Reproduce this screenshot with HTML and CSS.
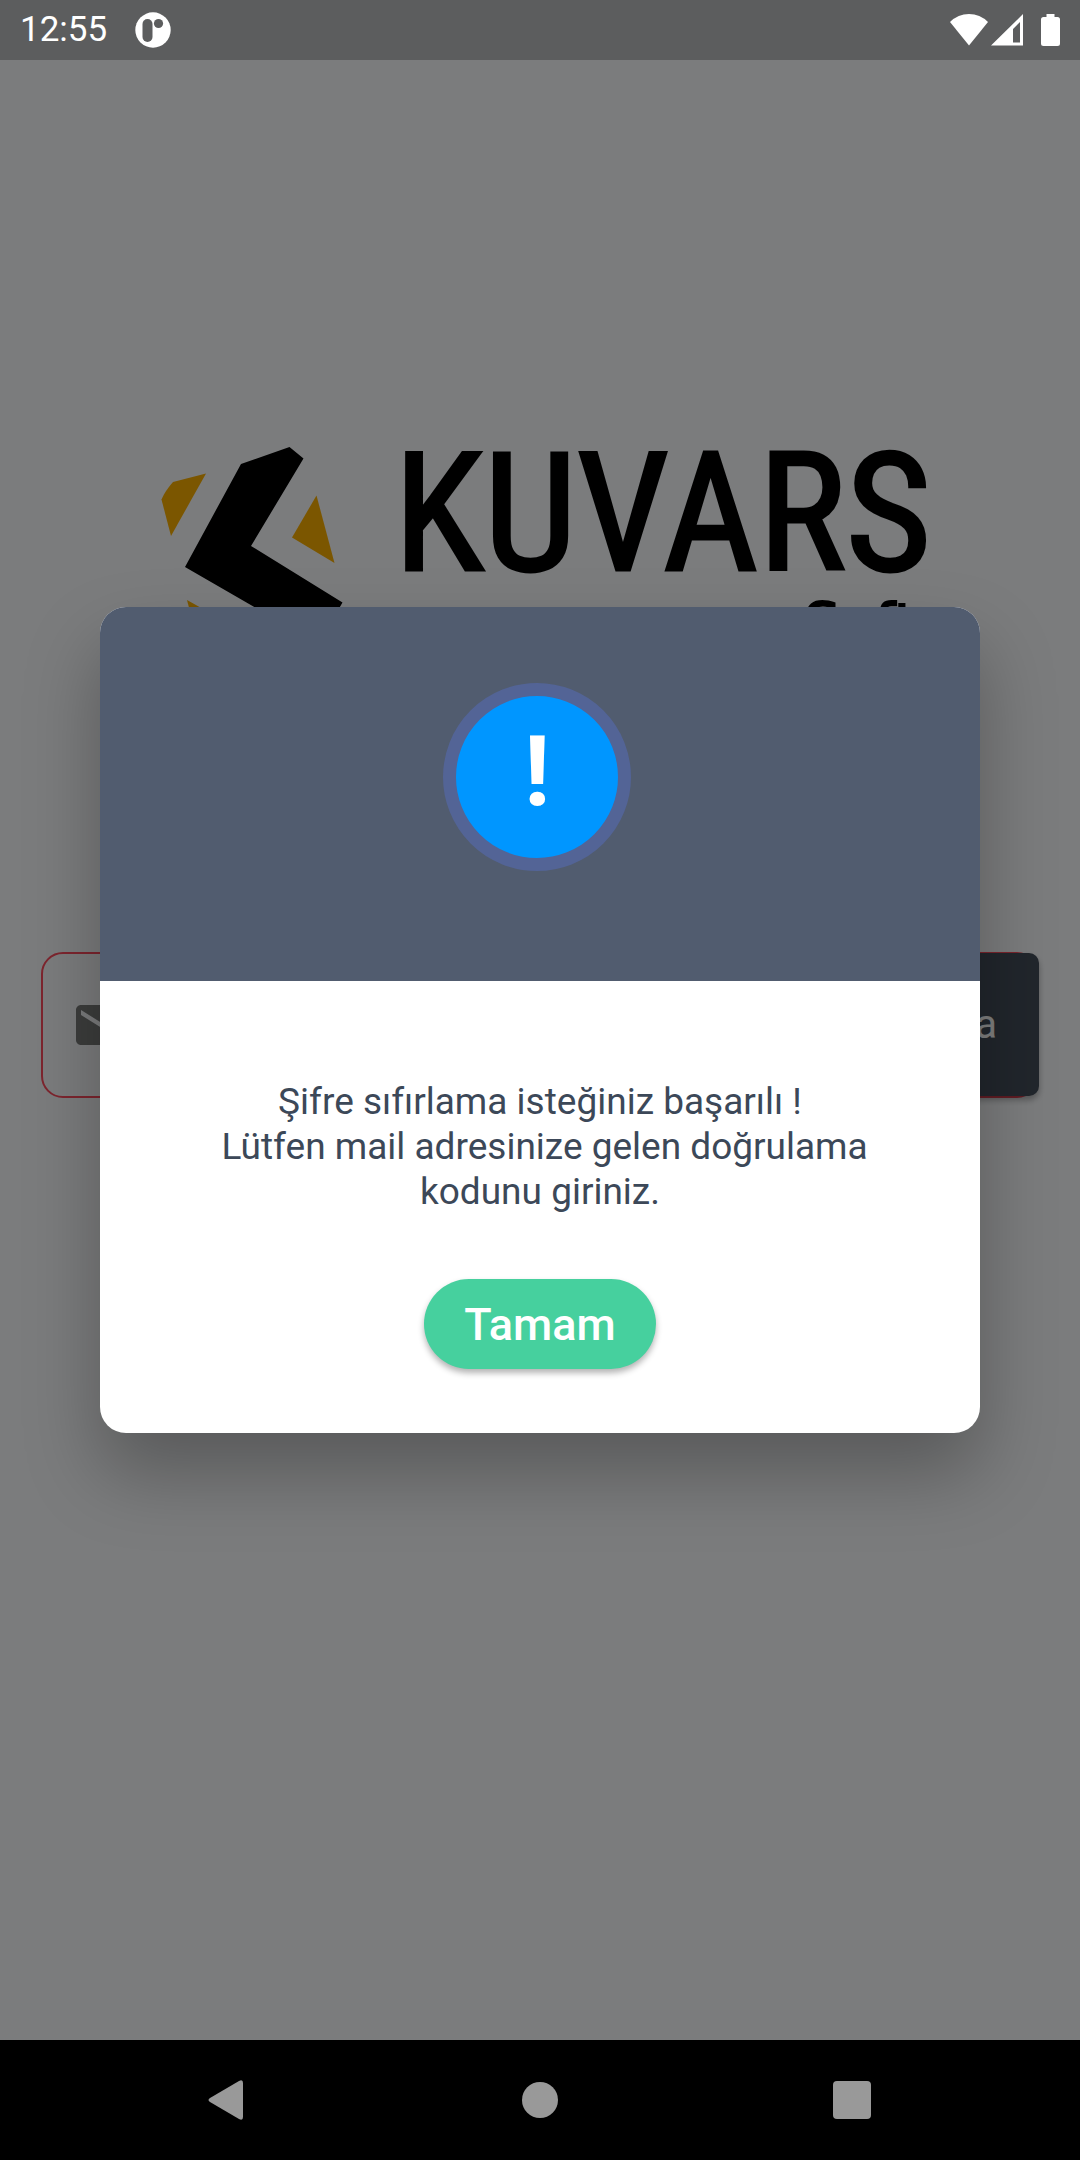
FILE: index.html
```html
<!DOCTYPE html>
<html lang="tr">
<head>
<meta charset="utf-8">
<meta name="viewport" content="width=device-width, initial-scale=1">
<title>Kuvars Soft</title>
<link rel="stylesheet" href="styles.css">
</head>
<body>
<div class="app">
  <header class="status">
    <time class="clock">12:55</time>
    <svg class="status-app" viewBox="0 0 36 36" aria-hidden="true">
      <circle cx="18" cy="18" r="17.7" fill="#fff"/>
      <rect x="7.5" y="7" width="10" height="23" rx="5" fill="#5c5d5e"/>
      <circle cx="23.5" cy="11.5" r="4.6" fill="#5c5d5e"/>
    </svg>
    <svg class="status-icons" viewBox="0 0 112 34" aria-hidden="true">
      <g fill="#fff">
        <path d="M0 9Q8 1 19 1t19 8L19 32.500z"/>
        <path fill-rule="evenodd" d="M73 1v31.500H41zM70 9l-7 7v13.500h7z"/>
        <path d="M96.500 1h8v3h3q2.500 0 2.500 2.500v24q0 2.500-2.500 2.500h-14q-2.500 0-2.500-2.500v-24q0-2.500 2.500-2.500h3z"/>
      </g>
    </svg>
  </header>

  <main class="page">
    <svg class="logo" viewBox="0 0 800 300" role="img" aria-label="Kuvars Soft">
      <g fill="#f7ac00">
        <path d="M66 13.500 33 22Q25 31 21.500 39.500L31 76z"/>
        <path d="M176.500 35.500 194.500 103 152 77.500z"/>
        <path d="M47 140l50 28-34 34z"/>
      </g>
      <path d="M101 4 149.500-13 163.500-1.500 111 86 202.500 142.500 150 232 140 162 45 107z"/>
      <text class="logo-name" x="254" y="110">KUVARS</text>
      <text class="logo-sub" x="664" y="184">Soft</text>
    </svg>
    <form class="reset">
      <label class="mail-icon" for="mail" aria-label="E-posta">
        <svg viewBox="0 0 24 24"><path fill="#787a79" d="M20 4H4c-1.100 0-2 .9-2 2v12c0 1.100.9 2 2 2h16c1.100 0 2-.9 2-2V6c0-1.100-.9-2-2-2zm0 4-8 5-8-5V6l8 5 8-5z"/></svg>
      </label>
      <input class="mail" id="mail" type="email">
      <button class="send" type="button">Yolla</button>
    </form>
  </main>

  <div class="overlay">
    <section class="dialog" role="alertdialog" aria-modal="true" aria-describedby="message">
      <div class="dialog-head"><div class="badge">!</div></div>
      <div class="dialog-body">
        <p class="message" id="message">Şifre sıfırlama isteğiniz başarılı !<br>&nbsp;Lütfen mail adresinize gelen doğrulama kodunu giriniz.</p>
        <button class="ok" type="button">Tamam</button>
      </div>
    </section>
  </div>
</div>

<nav class="nav">
  <button class="nav-button" type="button" aria-label="Geri"><svg viewBox="0 0 48 48"><path d="M39 7v34q0 4-4 2L6 26q-3-2 0-4L35 5q4-2 4 2z"/></svg></button>
  <button class="nav-button" type="button" aria-label="Ana ekran"><svg viewBox="0 0 48 48"><circle cx="24" cy="24" r="18"/></svg></button>
  <button class="nav-button" type="button" aria-label="Son uygulamalar"><svg viewBox="0 0 48 48"><rect x="5" y="5" width="38" height="38" rx="4"/></svg></button>
</nav>
</body>
</html>
```

FILE: styles.css
```css
* {
  box-sizing: border-box;
}

body {
  margin: 0;
  min-height: 100vh;
  display: flex;
  flex-direction: column;
  font-family: Roboto, "Liberation Sans", sans-serif;
  background: #000;
}

button {
  border: 0;
  font-family: inherit;
}

.app {
  position: relative;
  flex: 1;
  display: flex;
  flex-direction: column;
  background: #f7f9fb;
}

.status {
  position: relative;
  z-index: 2;
  height: 60px;
  padding: 0 18px 0 20px;
  display: flex;
  align-items: center;
  background: #5c5d5e;
  color: #fff;
}

.clock {
  font-size: 35px;
  line-height: 62px;
}

.status-app {
  width: 36px;
  height: 36px;
  margin-left: 28px;
}

.status-icons {
  width: 112px;
  height: 34px;
  margin-left: auto;
}

.page {
  flex: 1;
  display: flex;
  flex-direction: column;
  gap: 192px;
  padding: 400px 41px 0;
}

.logo {
  display: block;
  margin: 0 99px;
  overflow: visible;
}

.logo-name {
  font-family: "Liberation Sans Narrow", "Roboto Condensed", Roboto, sans-serif;
  font-size: 165px;
  stroke: #000;
  stroke-width: 3px;
}

.logo-sub {
  font-family: "DejaVu Sans", sans-serif;
  font-size: 57px;
  stroke: #000;
  stroke-width: 2px;
}

.reset {
  height: 146px;
  display: flex;
  align-items: stretch;
  border: 2px solid #fa4a5c;
  border-radius: 22px;
}

.mail-icon {
  width: 60px;
  margin-left: 28px;
  display: flex;
  align-items: center;
}

.mail {
  flex: 1;
  min-width: 0;
  padding: 0 20px;
  border: 0;
  background: transparent;
  font: inherit;
  font-size: 40px;
}

.send {
  margin: -1px -2px 0 0;
  padding: 0 42px;
  border-radius: 10px;
  background: #424c58;
  color: #fff;
  font-size: 40px;
  box-shadow: 0 4px 6px rgba(0, 0, 0, 0.3);
}

.overlay {
  position: absolute;
  inset: 0;
  z-index: 1;
  display: flex;
  align-items: center;
  justify-content: center;
  padding: 0 100px;
  background: rgba(0, 0, 0, 0.5);
}

.dialog {
  flex: 1;
  overflow: hidden;
  border-radius: 26px;
  background: #fff;
  box-shadow: 0 40px 76px rgba(0, 0, 0, 0.28);
}

.dialog-head {
  display: flex;
  justify-content: center;
  padding: 76px 6px 110px 0;
  background: #515c6f;
}

.badge {
  width: 188px;
  height: 188px;
  border: 13px solid #536496;
  border-radius: 50%;
  background: #0096ff;
  color: #fff;
  font-size: 98px;
  font-weight: 700;
  line-height: 152px;
  text-align: center;
}

.dialog-body {
  display: flex;
  flex-direction: column;
  align-items: center;
  gap: 65px;
  padding: 98px 100px 64px;
}

.message {
  margin: 0;
  color: #3c4858;
  font-size: 37px;
  line-height: 45px;
  text-align: center;
}

.ok {
  height: 90px;
  padding: 0 40px;
  border-radius: 45px;
  background: #46d09e;
  color: #fff;
  font-size: 45px;
  font-weight: 500;
  box-shadow: 0 4px 6px rgba(0, 0, 0, 0.3);
}

.nav {
  height: 120px;
  display: flex;
  justify-content: center;
  background: #000;
}

.nav-button {
  width: 312px;
  padding: 0;
  display: flex;
  align-items: center;
  justify-content: center;
  background: none;
}

.nav-button svg {
  width: 48px;
  height: 48px;
  fill: #999;
}
```
